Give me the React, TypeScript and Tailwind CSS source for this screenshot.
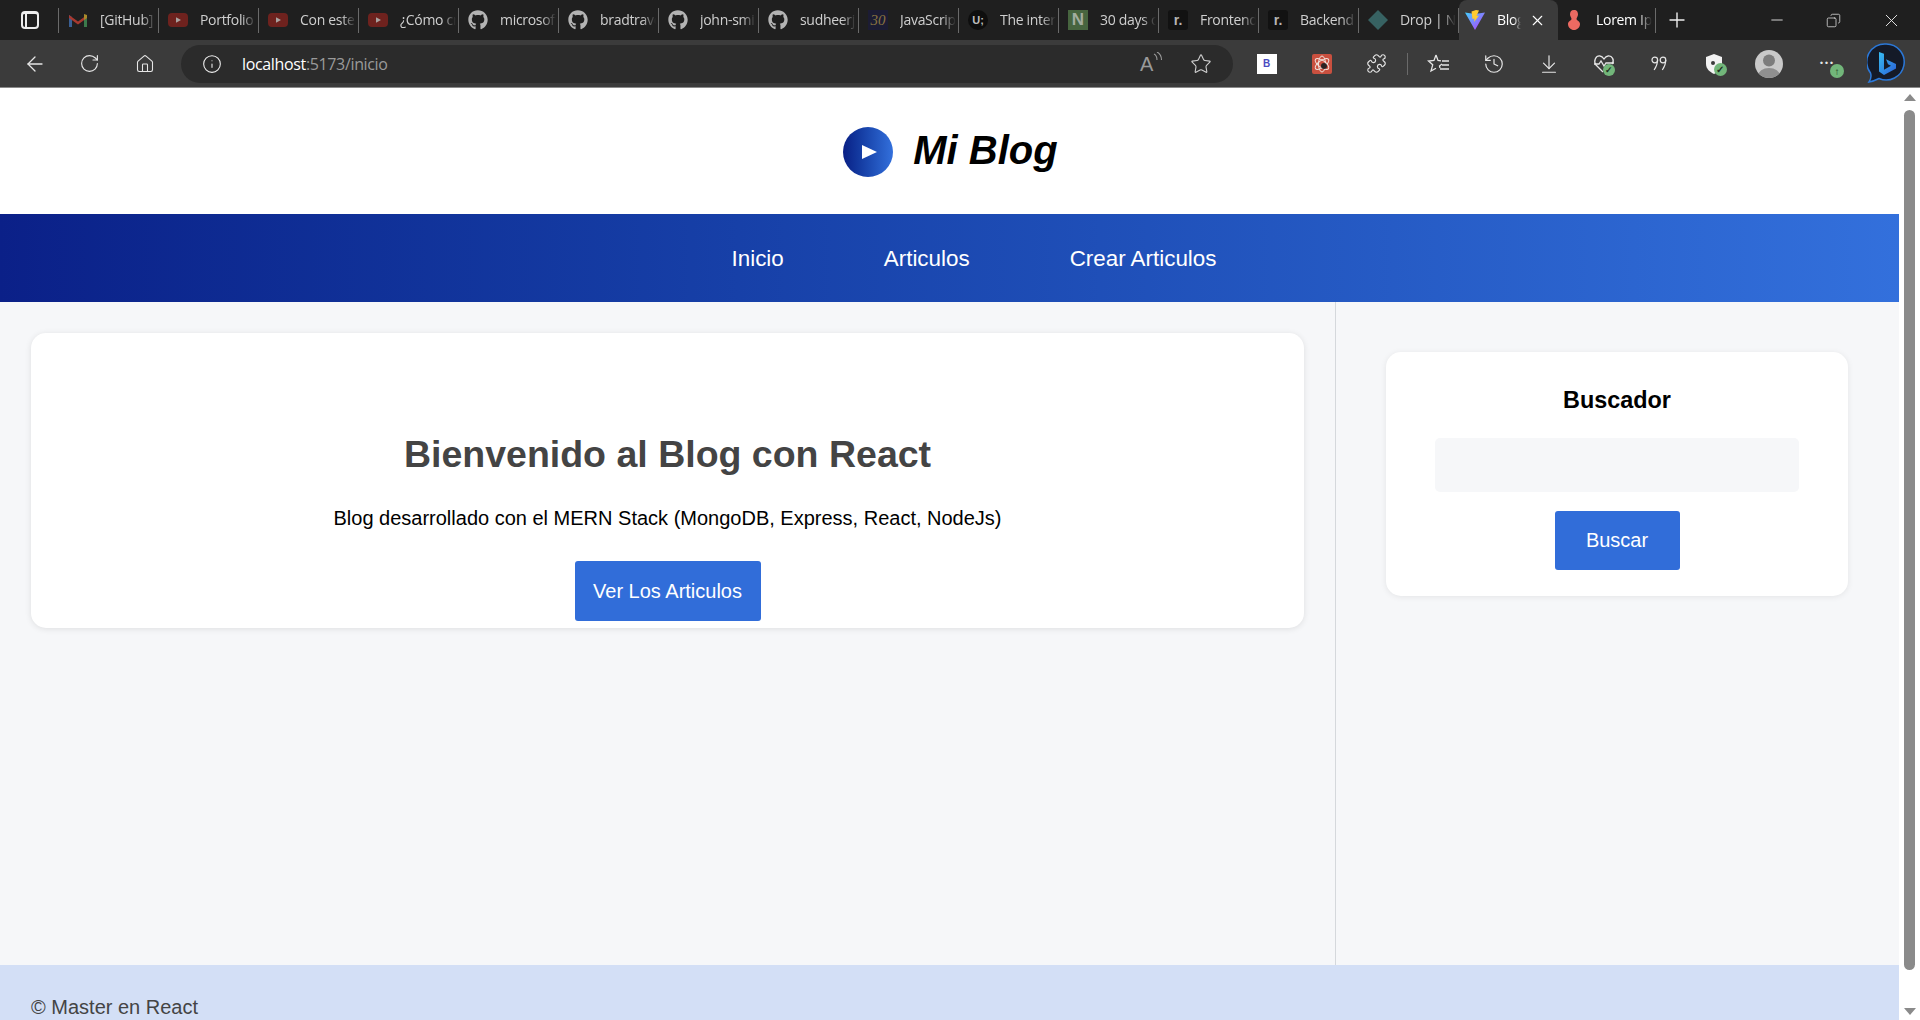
import type { ReactNode } from 'react';
import { FaGithub } from 'react-icons/fa';
import {
  ArrowDownToLine,
  ArrowLeft,
  Copy,
  History,
  Home,
  Info,
  Minus,
  Plus,
  Puzzle,
  RotateCw,
  Star,
  X,
} from 'lucide-react';

const YoutubeIcon = () => (
  <svg width="20" height="16" viewBox="0 0 20 16">
    <rect x="0" y="1" width="20" height="14" rx="4" fill="#6e221e" />
    <path d="M8 5.2 L13 8 L8 10.8 Z" fill="#a9a29f" />
  </svg>
);

const GmailIcon = () => (
  <svg width="20" height="16" viewBox="0 0 20 16">
    <path d="M1 15V3l3 2v10z" fill="#3a5f93" />
    <path d="M19 15V3l-3 2v10z" fill="#3c7a4c" />
    <path d="M1 3l9 6.5L19 3v3l-9 6.5L1 6z" fill="#a8392f" />
    <path d="M16 2l3 1v3l-3 2z" fill="#a98a2b" />
  </svg>
);

const GithubIcon = () => <FaGithub size={20} color="#b3b3b3" />;

const ThirtyIcon = () => (
  <div className="flex size-5 items-center justify-center bg-[#1c1c33] font-['Liberation_Serif',serif] text-[15px] italic text-[#8a7440]">
    30
  </div>
);

const UiIcon = () => (
  <div className="flex size-5 items-center justify-center rounded-full bg-[#0e0e0e] font-['Liberation_Sans',sans-serif] text-[11px] font-bold text-[#bdbdbd]">
    U;
  </div>
);

const NotionIcon = () => (
  <div className="flex size-5 items-center justify-center bg-[#47653f] font-['Liberation_Sans',sans-serif] text-[17px] font-bold text-[#a3ad9f]">
    N
  </div>
);

const RenderIcon = () => (
  <div className="flex size-5 items-center justify-center rounded-[3px] bg-[#121212] font-['Liberation_Sans',sans-serif] text-[14px] font-bold text-[#b5b5b5]">
    r.
  </div>
);

const DropIcon = () => (
  <svg width="20" height="20" viewBox="0 0 20 20">
    <path d="M10 0 L20 10 L10 20 L0 10 Z" fill="#376262" />
  </svg>
);

const ViteIcon = () => (
  <svg width="20" height="20" viewBox="0 0 20 20">
    <defs>
      <linearGradient id="vite-a" x1="0" y1="0" x2="1" y2="1">
        <stop offset="0" stopColor="#41d1ff" />
        <stop offset="1" stopColor="#bd34fe" />
      </linearGradient>
    </defs>
    <path d="M0 2.5 L10 4 L20 2.5 L10 20 Z" fill="url(#vite-a)" />
    <path d="M11 0 L6.5 1.5 L7.5 9 L9.5 8.5 L9 12 L14 5.5 L11.5 6 L14 .5 Z" fill="#ffcb2e" />
  </svg>
);

const LoremIcon = () => (
  <svg width="14" height="20" viewBox="0 0 14 20">
    <path
      d="M7 0c3 0 4 2 4 4.5 0 2-1.500 3-1.500 4.500S13 11 13 14c0 3.500-3 6-6 6s-6-2.500-6-6c0-3 3.500-3.500 3.500-5S3 6.500 3 4.500C3 2 4 0 7 0z"
      fill="#ec6a62"
    />
  </svg>
);

const tabs = [
  { title: '[GitHub] Please', icon: <GmailIcon /> },
  { title: 'Portfolio', icon: <YoutubeIcon /> },
  { title: 'Con este', icon: <YoutubeIcon /> },
  { title: '¿Cómo crear', icon: <YoutubeIcon /> },
  { title: 'microsoft', icon: <GithubIcon /> },
  { title: 'bradtraversy', icon: <GithubIcon /> },
  { title: 'john-smilga', icon: <GithubIcon /> },
  { title: 'sudheerj', icon: <GithubIcon /> },
  { title: 'JavaScript', icon: <ThirtyIcon /> },
  { title: 'The internet', icon: <UiIcon /> },
  { title: '30 days of', icon: <NotionIcon /> },
  { title: 'Frontend', icon: <RenderIcon /> },
  { title: 'Backend', icon: <RenderIcon /> },
  { title: 'Drop | Next', icon: <DropIcon /> },
];

const TabItem = ({ title, icon }: { title: string; icon: ReactNode }) => (
  <div className="flex h-10 w-[100px] shrink-0 items-center">
    <div className="flex w-[99px] items-center pl-[9px]">
      <div className="flex w-5 shrink-0 justify-center">{icon}</div>
      <span className="-mt-[2px] ml-[12px] w-[56px] overflow-hidden whitespace-nowrap text-[14px] tracking-[-0.3px] text-[#cfcfcf] [mask-image:linear-gradient(to_right,black_75%,transparent)]">
        {title}
      </span>
    </div>
    <div className="h-[25px] w-px bg-[#6a6a6a]" />
  </div>
);

const ToolButton = ({ children }: { children: ReactNode }) => (
  <div className="flex h-12 w-[55px] shrink-0 items-center justify-center text-[#e6e6e6]">{children}</div>
);

const Badge = ({ children, className }: { children: ReactNode; className: string }) => (
  <span className={`absolute flex items-center justify-center rounded-full bg-[#72b67a] font-bold leading-none text-[#1e2e1e] ${className}`}>
    {children}
  </span>
);

const BrowserChrome = () => (
  <div className="shrink-0 font-['Open_Sans',sans-serif]">
    <div className="flex h-10 items-center bg-[#1f1f1f]">
      <div className="flex h-10 w-[59px] shrink-0 items-center">
        <div className="flex w-[58px] justify-center pl-[2px]">
          <div className="flex h-[18px] w-[18px] rounded-[4px] border-2 border-t-[3px] border-[#ededed]">
            <div className="w-[4px] border-r-2 border-[#ededed]" />
          </div>
        </div>
        <div className="h-[25px] w-px bg-[#6a6a6a]" />
      </div>
      {tabs.map((tab) => (
        <TabItem key={tab.title} title={tab.title} icon={tab.icon} />
      ))}
      <div className="flex h-10 w-[99px] shrink-0 items-center rounded-t-lg bg-[#3b3b3b] pl-[6px]">
        <ViteIcon />
        <span className="-mt-[2px] ml-[12px] w-[24px] overflow-hidden whitespace-nowrap text-[14px] tracking-[-0.3px] text-white [mask-image:linear-gradient(to_right,black_70%,transparent)]">
          Blog
        </span>
        <X size={17} strokeWidth={1.6} className="ml-[8px] text-white" />
      </div>
      <div className="flex h-10 w-[98px] shrink-0 items-center">
        <div className="flex w-[97px] items-center pl-[9px]">
          <LoremIcon />
          <span className="-mt-[2px] ml-[15px] w-[56px] overflow-hidden whitespace-nowrap text-[14px] tracking-[-0.3px] text-white [mask-image:linear-gradient(to_right,black_75%,transparent)]">
            Lorem Ipsum
          </span>
        </div>
        <div className="h-[25px] w-px bg-[#6a6a6a]" />
      </div>
      <Plus size={24} strokeWidth={1.4} className="ml-[9px] text-[#eeeeee]" />
      <div className="flex-1" />
      <div className="flex items-center text-[#e6e6e6]">
        <div className="flex w-[57px] justify-center">
          <Minus size={18} strokeWidth={1.2} />
        </div>
        <div className="flex w-[57px] justify-center">
          <Copy size={15} strokeWidth={1.2} className="-scale-x-100" />
        </div>
        <div className="flex w-[58px] justify-center">
          <X size={21} strokeWidth={1.1} />
        </div>
      </div>
    </div>

    <div className="flex h-12 items-center border-b border-[#8a8a8a] bg-[#3b3b3b] pl-[7px]">
      <ToolButton>
        <ArrowLeft size={24} strokeWidth={1.3} />
      </ToolButton>
      <ToolButton>
        <RotateCw size={21} strokeWidth={1.3} />
      </ToolButton>
      <ToolButton>
        <Home size={20} strokeWidth={1.3} />
      </ToolButton>
      <div className="ml-[9px] flex h-[38px] w-[1052px] shrink-0 items-center rounded-full bg-[#2b2b2b] pl-[21px] pr-[21px]">
        <Info size={20} strokeWidth={1.3} className="text-[#eeeeee]" />
        <span className="ml-[20px] text-[16px] tracking-[-0.35px] text-white">
          localhost<span className="text-[#9a9a9a]">:5173/inicio</span>
        </span>
        <div className="flex-1" />
        <div className="relative mr-[30px] h-5 w-5 font-['Liberation_Sans',sans-serif] text-[20px] leading-5 text-[#9a9a9a]">
          A
          <svg className="absolute -right-[3px] -top-[2px]" width="10" height="12" viewBox="0 0 10 12" fill="none" stroke="#9a9a9a" strokeWidth="1.100">
            <path d="M1 2c2 1 3 3 3 6M4 0c3 1.500 4.500 4 4.500 8" />
          </svg>
        </div>
        <Star size={22} strokeWidth={1.2} className="text-[#cfcfcf]" />
      </div>
      <div className="ml-[6px] flex items-center">
        <ToolButton>
          <div className="flex h-5 w-5 items-center justify-center bg-white font-['Liberation_Sans',sans-serif] text-[10px] font-bold text-[#4a4ac0]">
            B
          </div>
        </ToolButton>
        <ToolButton>
          <svg width="20" height="24" viewBox="0 0 20 24">
            <rect y="2" width="20" height="20" rx="2" fill="#c9503f" />
            <g fill="none" stroke="#f1e2dc" strokeWidth="1">
              <ellipse cx="10" cy="12" rx="8" ry="3.500" transform="rotate(35 10 12)" />
              <ellipse cx="10" cy="12" rx="8" ry="3.500" transform="rotate(-35 10 12)" />
              <ellipse cx="10" cy="12" rx="3.500" ry="8" />
            </g>
            <circle cx="12" cy="14" r="3" fill="#2a2222" />
          </svg>
        </ToolButton>
        <ToolButton>
          <Puzzle size={21} strokeWidth={1.3} />
        </ToolButton>
        <div className="mx-[3px] h-[22px] w-px bg-[#6a6a6a]" />
        <ToolButton>
          <svg width="24" height="24" viewBox="0 0 24 24" fill="none" stroke="#e6e6e6" strokeWidth="1.300">
            <path d="M9 3l2 5.500 3 .3M15 12l-2.500 2 .5 2M9 3L7 8.500 1.500 9l4.200 3.800L4 19l5-2.800" />
            <path d="M15 9h7M15 13h7M13 17h9" />
          </svg>
        </ToolButton>
        <ToolButton>
          <History size={22} strokeWidth={1.3} />
        </ToolButton>
        <ToolButton>
          <ArrowDownToLine size={22} strokeWidth={1.3} className="-scale-y-100 rotate-180" />
        </ToolButton>
        <ToolButton>
          <div className="relative">
            <svg width="22" height="22" viewBox="0 0 22 22" fill="none" stroke="#e6e6e6" strokeWidth="1.300">
              <path d="M10 19L3 12C0 8 3 2.500 7 3c2 .2 3 1.500 4 3 1-1.500 2-2.800 4-3 4-.5 7 4 4 8" />
              <path d="M1 11h5l2-3 3 5 2-3h8" />
            </svg>
            <Badge className="-bottom-[1px] right-0 size-[12px] bg-[#55a85c] text-[9px]">✓</Badge>
          </div>
        </ToolButton>
        <ToolButton>
          <svg width="16" height="16" viewBox="0 0 16 16" fill="none" stroke="#e6e6e6" strokeWidth="1.200">
            <circle cx="3.800" cy="4" r="2.800" />
            <path d="M6.600 4c0 4-1.500 7-3.500 10" />
            <circle cx="12" cy="4" r="2.800" />
            <path d="M14.800 4c0 4-1.500 7-3.500 10" />
          </svg>
        </ToolButton>
        <ToolButton>
          <div className="relative">
            <svg width="18" height="22" viewBox="0 0 18 22">
              <path d="M9 1l8 3v7c0 5-4 8-8 10-4-2-8-5-8-10V4z" fill="#f2f2f2" />
              <circle cx="8" cy="10" r="2" fill="#3b3b3b" />
            </svg>
            <Badge className="-bottom-[1px] -right-[4px] size-[13px] text-[10px]">✓</Badge>
          </div>
        </ToolButton>
        <ToolButton>
          <svg width="28" height="28" viewBox="0 0 28 28">
            <defs>
              <clipPath id="avatar-clip">
                <circle cx="14" cy="14" r="14" />
              </clipPath>
            </defs>
            <circle cx="14" cy="14" r="14" fill="#c9c9c9" />
            <circle cx="14" cy="10.500" r="6" fill="#7d7d7d" />
            <ellipse cx="14" cy="26" rx="11" ry="8" fill="#8f8f8f" clipPath="url(#avatar-clip)" />
          </svg>
        </ToolButton>
        <div className="relative flex h-12 w-[62px] shrink-0 items-center justify-center">
          <span className="mb-[2px] text-[14px] font-bold leading-none tracking-[1px] text-[#e6e6e6]">···</span>
          <Badge className="bottom-[10px] right-[14px] size-[14px] text-[10px] text-[#1e3320]">↑</Badge>
        </div>
        <svg width="38" height="42" viewBox="0 0 38 42" className="ml-[9px] shrink-0">
          <defs>
            <linearGradient id="bing-b" x1="0" y1="0" x2="1" y2="1">
              <stop offset="0" stopColor="#37bdf2" />
              <stop offset="1" stopColor="#2a5fd8" />
            </linearGradient>
          </defs>
          <path d="M19 1a18 18 0 1 1-7 34.500c-3 1.500-6 3-10 3.500 2-3 2.500-6 1.500-9A18 18 0 0 1 19 1z" fill="#141a28" stroke="#2b78d8" strokeWidth="1.500" />
          <path d="M12 9l5 1.800v16l7-4-3-1.500-2-5 10 4.700v4.500l-12 6.500-5-3.500z" fill="url(#bing-b)" />
        </svg>
      </div>
    </div>
  </div>
);

const Scrollbar = () => (
  <div className="flex w-[21px] shrink-0 flex-col items-center bg-white pt-[6px]">
    <div className="h-0 w-0 border-x-[6px] border-b-[7px] border-x-transparent border-b-[#8a8a8a]" />
    <div className="mt-[9px] h-[860px] w-[11px] rounded-full bg-[#8a8a8a]" />
    <div className="mt-[38px] h-0 w-0 border-x-[6px] border-t-[7px] border-x-transparent border-t-[#8a8a8a]" />
  </div>
);

const App = () => {
  return (
    <div className="flex h-[1020px] flex-col overflow-hidden bg-white font-['Liberation_Sans',Arial,sans-serif]">
      <BrowserChrome />
      <div className="flex min-h-0 flex-1">
        <div className="flex min-w-0 flex-1 flex-col">
          <header className="flex h-[126px] shrink-0 items-center justify-center gap-5 bg-white pl-[2px]">
            <div className="mt-[2px] flex size-[50px] items-center justify-center rounded-full bg-gradient-to-r from-[#0a1f85] to-[#3370dc] pl-[2px]">
              <div className="h-0 w-0 border-y-[7px] border-l-[15px] border-y-transparent border-l-white" />
            </div>
            <h1 className="mb-[2px] text-[40px] font-bold italic leading-none text-black">Mi Blog</h1>
          </header>

          <nav className="flex h-[88px] shrink-0 items-center justify-center gap-[100px] bg-gradient-to-r from-[#0b2088] to-[#3370dc] pl-[49px] pt-[2px] text-[22.4px] text-white">
            <a href="#inicio">Inicio</a>
            <a href="#articulos">Articulos</a>
            <a href="#crear">Crear Articulos</a>
          </nav>

          <div className="flex h-[663px] shrink-0 bg-[#f6f7f9]">
            <main className="w-[1335px] shrink-0 px-[31px] pt-[31px]">
              <div className="flex h-[295px] flex-col items-center rounded-[15px] bg-white pt-[100px] shadow-[0_1px_6px_rgba(0,0,0,0.1)]">
                <h2 className="text-[37.5px] font-bold leading-[43px] text-[#444444]">Bienvenido al Blog con React</h2>
                <p className="mt-[31px] text-[20px] leading-[23px] text-black">
                  Blog desarrollado con el MERN Stack (MongoDB, Express, React, NodeJs)
                </p>
                <button className="mt-[31px] h-[60px] w-[186px] rounded-[3px] bg-[#316dd9] text-[20px] text-white">
                  Ver Los Articulos
                </button>
              </div>
            </main>

            <aside className="flex-1 border-l border-[#d5d8dc] pl-[50px] pr-[51px] pt-[50px]">
              <div className="flex h-[244px] flex-col items-center rounded-[15px] bg-white px-[49px] pt-[34px] shadow-[0_1px_6px_rgba(0,0,0,0.08)]">
                <h3 className="text-[23.4px] font-bold leading-[28px] text-black">Buscador</h3>
                <input
                  type="text"
                  aria-label="Buscar"
                  className="mt-[24px] h-[54px] w-full rounded-[5px] bg-[#f6f7f9]"
                />
                <button className="mt-[19px] h-[59px] w-[125px] rounded-[3px] bg-[#316dd9] pb-[2px] text-[20px] text-white">
                  Buscar
                </button>
              </div>
            </aside>
          </div>

          <footer className="flex-1 bg-[#d3dff6] pl-[31px] pt-[31px] text-[20px] leading-[23px] text-[#444444]">
            © Master en React
          </footer>
        </div>
        <Scrollbar />
      </div>
    </div>
  );
};

export default App;
